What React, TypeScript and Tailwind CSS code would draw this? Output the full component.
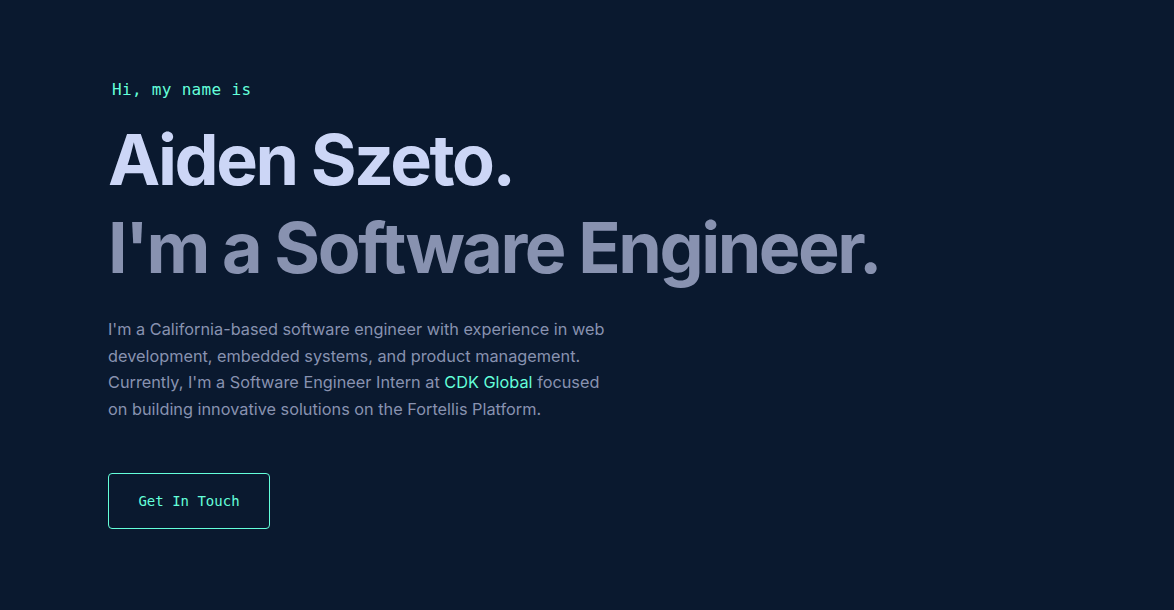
import React from 'react';

const App: React.FC = () => {
  return (
    <div className="min-h-screen w-full bg-[#0a192f] font-['Inter',sans-serif] antialiased">
      <section className="flex flex-col items-start pl-[108px] pt-[78px]">
        <h1 className="ml-[4px] font-['DejaVu_Sans_Mono',monospace] text-[16px] leading-[24px] tracking-[0.02em] text-[#64ffda]">
          Hi, my name is
        </h1>
        <h2 className="mt-[14px] text-[70px] font-bold leading-[88px] tracking-[-0.035em] text-[#ccd6f6]">
          Aiden Szeto.
        </h2>
        <h3 className="text-[70px] font-bold leading-[88px] tracking-[-0.035em] text-[#8892b0]">
          I'm a Software Engineer.
        </h3>
        <p className="mt-[24px] w-[520px] text-[16.3px] leading-[26.5px] text-[#8892b0]">
          I'm a California-based software engineer with experience in web
          <br />
          development, embedded systems, and product management.
          <br />
          Currently, I'm a Software Engineer Intern at <a className="text-[#64ffda]" href="#">CDK Global</a> focused
          <br />
          on building innovative solutions on the Fortellis Platform.
        </p>
        <a
          href="#"
          className="mt-[51px] flex h-[56px] w-[162px] items-center justify-center rounded-[4px] border border-[#64ffda] font-['DejaVu_Sans_Mono',monospace] text-[14px] text-[#64ffda]"
        >
          Get In Touch
        </a>
      </section>
    </div>
  );
};

export default App;
